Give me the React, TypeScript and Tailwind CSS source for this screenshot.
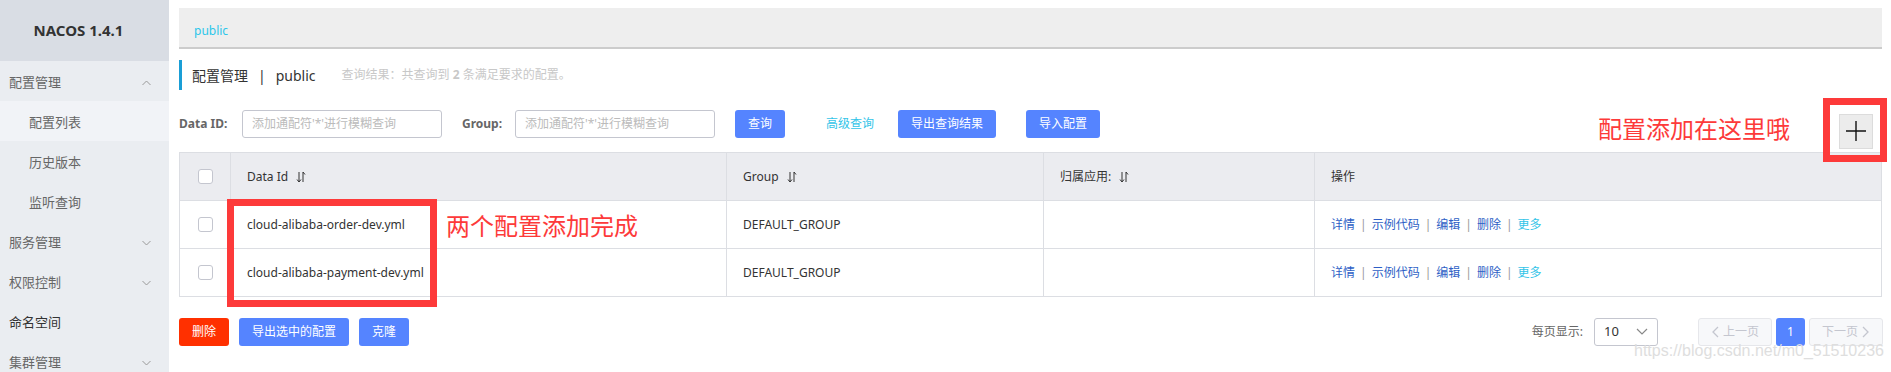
import React from "react";

const SortIcon = () => (
  <svg width="10" height="12" viewBox="0 0 10 12" className="ml-[8px] inline-block" fill="none" stroke="#333" strokeWidth="1">
    <path d="M3 1v10M1 8.5l2 2.5 2-2.5" />
    <path d="M7 11V1M7 1l2 2.5" />
  </svg>
);

const Chevron = ({ up = false }: { up?: boolean }) => (
  <svg width="9" height="6" viewBox="0 0 9 6" fill="none" stroke="#999" strokeWidth="1">
    {up ? <path d="M0.5 5l4-4 4 4" /> : <path d="M0.5 1l4 4 4-4" />}
  </svg>
);

const Checkbox = () => (
  <div className="w-[15px] h-[15px] rounded-[3px] border border-[#c4c6cf] bg-white mx-auto" />
);

const menu = [
  { label: "配置管理", sub: false, chevron: "up" },
  { label: "配置列表", sub: true, active: true },
  { label: "历史版本", sub: true },
  { label: "监听查询", sub: true },
  { label: "服务管理", sub: false, chevron: "down" },
  { label: "权限控制", sub: false, chevron: "down" },
  { label: "命名空间", sub: false, dark: true },
  { label: "集群管理", sub: false, chevron: "down" },
];

const rows = [
  { id: "cloud-alibaba-order-dev.yml", group: "DEFAULT_GROUP" },
  { id: "cloud-alibaba-payment-dev.yml", group: "DEFAULT_GROUP" },
];

const ops = ["详情", "示例代码", "编辑", "删除"];

export default function App() {
  return (
    <div
      className="relative flex w-full h-[372px] overflow-hidden bg-white text-[12px] text-[#333]"
      style={{ fontFamily: '"Noto Sans", "Noto Sans CJK SC", sans-serif' }}
    >
      {/* Sidebar */}
      <aside className="w-[169px] shrink-0 bg-[#eaedf1]">
        <div className="h-[61px] bg-[#d9dde4] flex items-center justify-center pr-[12px]">
          <span className="text-[15px] font-bold text-[#333]">NACOS 1.4.1</span>
        </div>
        {menu.map((m) => (
          <div
            key={m.label}
            className={`h-[40px] flex items-center justify-between pt-[4px] pr-[18px] ${m.sub ? "pl-[29px]" : "pl-[9px]"} ${
              m.active ? "bg-[#f1f3f7]" : ""
            } ${m.dark ? "text-[#333]" : "text-[#666]"}`}
          >
            <span className="text-[13px]">{m.label}</span>
            {m.chevron && <Chevron up={m.chevron === "up"} />}
          </div>
        ))}
      </aside>

      {/* Main */}
      <main className="flex-1 pl-[10px] pr-[9px] pt-[8px]">
        <div className="h-[41px] bg-[#eeeeee] border-b-2 border-[#cccccc] flex items-center pl-[15px] pt-[6px]">
          <span className="text-[#2cc6ea]">public</span>
        </div>

        <div className="mt-[11px] h-[30px] border-l-[3px] border-[#1a9ed6] flex items-center pl-[10px]">
          <span className="text-[14px] text-[#333]">配置管理</span>
          <span className="text-[14px] text-[#333] mx-[10px]">|</span>
          <span className="text-[14px] text-[#333]">public</span>
          <span className="ml-[26px] text-[#c8c8c8]">
            查询结果：共查询到 <b className="font-bold">2</b> 条满足要求的配置。
          </span>
        </div>

        <div className="mt-[20px] h-[28px] flex items-center">
          <span className="font-bold text-[#666] w-[63px]">Data ID:</span>
          <div className="w-[200px] h-[28px] border border-[#c4c6cf] rounded-[3px] flex items-center pl-[9px] text-[#bbb]">
            添加通配符'*'进行模糊查询
          </div>
          <span className="font-bold text-[#666] ml-[20px] w-[53px]">Group:</span>
          <div className="w-[200px] h-[28px] border border-[#c4c6cf] rounded-[3px] flex items-center pl-[9px] text-[#bbb]">
            添加通配符'*'进行模糊查询
          </div>
          <button className="ml-[20px] w-[50px] h-[28px] rounded-[3px] bg-[#5584ff] text-white">查询</button>
          <span className="ml-[41px] text-[#33c4e8]">高级查询</span>
          <button className="ml-[24px] w-[98px] h-[28px] rounded-[3px] bg-[#5584ff] text-white">导出查询结果</button>
          <button className="ml-[30px] w-[74px] h-[28px] rounded-[3px] bg-[#5584ff] text-white">导入配置</button>
          <button className="ml-auto mr-[9px] mt-[14px] w-[34px] h-[35px] bg-[#ececec] border border-[#dcdcdc] flex items-center justify-center">
            <svg width="22" height="22" viewBox="0 0 22 22" stroke="#111" strokeWidth="1.4">
              <path d="M11 1v20M1 11h20" />
            </svg>
          </button>
        </div>

        <table className="mt-[14px] w-full border-collapse table-fixed border border-[#dcdee3]">
          <colgroup>
            <col className="w-[51px]" />
            <col className="w-[496px]" />
            <col className="w-[317px]" />
            <col className="w-[271px]" />
            <col />
          </colgroup>
          <thead>
            <tr className="h-[48px] bg-[#ebecf0]">
              <th className="border border-[#dcdee3] font-normal">
                <Checkbox />
              </th>
              <th className="border border-[#dcdee3] font-normal text-left pl-[16px]">
                <span className="inline-flex items-center">Data Id<SortIcon /></span>
              </th>
              <th className="border border-[#dcdee3] font-normal text-left pl-[16px]">
                <span className="inline-flex items-center">Group<SortIcon /></span>
              </th>
              <th className="border border-[#dcdee3] font-normal text-left pl-[16px]">
                <span className="inline-flex items-center">归属应用:<SortIcon /></span>
              </th>
              <th className="border border-[#dcdee3] font-normal text-left pl-[16px]">操作</th>
            </tr>
          </thead>
          <tbody>
            {rows.map((r) => (
              <tr key={r.id} className="h-[48px]">
                <td className="border border-[#dcdee3]">
                  <Checkbox />
                </td>
                <td className="border border-[#dcdee3] pl-[16px]">{r.id}</td>
                <td className="border border-[#dcdee3] pl-[16px]">{r.group}</td>
                <td className="border border-[#dcdee3]" />
                <td className="border border-[#dcdee3] pl-[16px]">
                  {ops.map((o) => (
                    <React.Fragment key={o}>
                      <span className="text-[#2e5fc6]">{o}</span>
                      <span className="text-[#999] mx-[5px]">|</span>
                    </React.Fragment>
                  ))}
                  <span className="text-[#33c4e8]">更多</span>
                </td>
              </tr>
            ))}
          </tbody>
        </table>

        <div className="mt-[21px] h-[28px] flex items-center">
          <button className="w-[50px] h-[28px] rounded-[3px] bg-[#ff3000] text-white">删除</button>
          <button className="ml-[10px] w-[110px] h-[28px] rounded-[3px] bg-[#5584ff] text-white">导出选中的配置</button>
          <button className="ml-[10px] w-[50px] h-[28px] rounded-[3px] bg-[#5584ff] text-white">克隆</button>

          <div className="ml-auto flex items-center">
            <span className="text-[#666]">每页显示:</span>
            <div className="ml-[11px] w-[64px] h-[28px] border border-[#c4c6cf] rounded-[3px] flex items-center justify-between pl-[9px] pr-[9px]">
              <span className="text-[#333] text-[13px]">10</span>
              <svg width="12" height="8" viewBox="0 0 12 8" fill="none" stroke="#888" strokeWidth="1.2">
                <path d="M1 1l5 5 5-5" />
              </svg>
            </div>
            <div className="ml-[40px] w-[74px] h-[28px] border border-[#e6e7eb] bg-[#f7f8fa] rounded-[3px] flex items-center justify-center gap-[4px] text-[#c4c6cf]">
              <svg width="8" height="12" viewBox="0 0 8 12" fill="none" stroke="#c4c6cf" strokeWidth="1.3">
                <path d="M7 1L2 6l5 5" />
              </svg>
              <span>上一页</span>
            </div>
            <div className="ml-[4px] w-[29px] h-[28px] rounded-[3px] bg-[#5584ff] text-white flex items-center justify-center">1</div>
            <div className="ml-[4px] mr-[-1px] w-[74px] h-[28px] border border-[#e6e7eb] bg-[#f7f8fa] rounded-[3px] flex items-center justify-center gap-[4px] text-[#c4c6cf]">
              <span>下一页</span>
              <svg width="8" height="12" viewBox="0 0 8 12" fill="none" stroke="#c4c6cf" strokeWidth="1.3">
                <path d="M1 1l5 5-5 5" />
              </svg>
            </div>
          </div>
        </div>
      </main>

      {/* annotations */}
      <div className="absolute left-[227px] top-[199px] w-[210px] h-[108px] border-[7px] border-[#fd3a3a]" />
      <div className="absolute left-[1823px] top-[98px] w-[64px] h-[64px] border-[7px] border-[#fd3a3a]" />
      <div className="absolute left-[446px] top-[214px] text-[24px] leading-none text-[#fd3a3a]">两个配置添加完成</div>
      <div className="absolute left-[1598px] top-[117px] text-[24px] leading-none text-[#fd3a3a]">配置添加在这里哦</div>
      <div
        className="absolute left-[1634px] top-[343px] text-[16px] leading-none text-[#dedede]"
        style={{ fontFamily: '"Liberation Sans", sans-serif' }}
      >
        https://blog.csdn.net/m0_51510236
      </div>
    </div>
  );
}
